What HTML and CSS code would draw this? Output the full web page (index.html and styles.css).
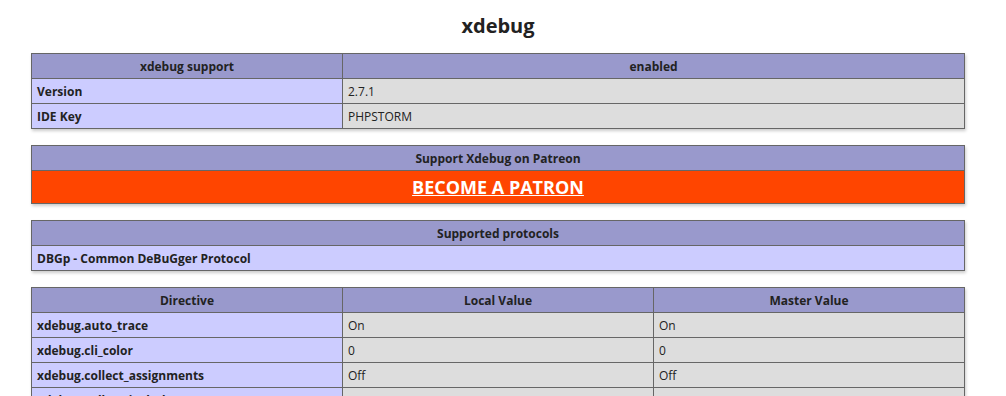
FILE: index.html
```html
<!DOCTYPE html>
<html>
<head>
<meta charset="utf-8">
<title>xdebug</title>
<link rel="stylesheet" href="styles.css">
</head>
<body>
<div class="center">
<h2 class="title">xdebug</h2>
<table>
<tr class="h"><th>xdebug support</th><th>enabled</th></tr>
<tr><td class="e">Version </td><td class="v">2.7.1 </td></tr>
<tr><td class="e">IDE Key </td><td class="v">PHPSTORM </td></tr>
</table>
<table>
<tr class="h"><th>Support Xdebug on Patreon</th></tr>
<tr><td class="patron"><a href="#">BECOME A PATRON</a></td></tr>
</table>
<table>
<tr class="h"><th>Supported protocols</th></tr>
<tr><td class="e">DBGp - Common DeBuGger Protocol</td></tr>
</table>
<table class="directives">
<tr class="h"><th>Directive</th><th>Local Value</th><th>Master Value</th></tr>
<tr><td class="e">xdebug.auto_trace</td><td class="v">On</td><td class="v">On</td></tr>
<tr><td class="e">xdebug.cli_color</td><td class="v">0</td><td class="v">0</td></tr>
<tr><td class="e">xdebug.collect_assignments</td><td class="v">Off</td><td class="v">Off</td></tr>
<tr><td class="e">xdebug.collect_includes</td><td class="v">On</td><td class="v">On</td></tr>
<tr><td class="e">xdebug.collect_params</td><td class="v">0</td><td class="v">0</td></tr>
</table>
</div>
</body>
</html>
```
FILE: styles.css
```css
html, body {
  margin: 0;
  padding: 0;
  background: #fff;
  color: #222;
  font-family: "Open Sans", "Noto Sans", sans-serif;
  overflow: hidden;
}
.center {
  width: 996px;
  text-align: center;
}
.title {
  font-size: 20px;
  font-weight: bold;
  margin: 0;
  padding-top: 12px;
  line-height: 28px;
  height: 27px;
}
table {
  border-collapse: collapse;
  border: 0;
  width: 934px;
  margin: 14px auto 16px;
  text-align: left;
  box-shadow: 1px 2px 3px #ccc;
}
table + table { margin-top: 16px; }
td, th {
  border: 1px solid #666;
  font-size: 12px;
  line-height: 16px;
  vertical-align: baseline;
  padding: 5px 5px 3px;
}
th {
  text-align: center;
  font-weight: bold;
}
.h {
  background-color: #99c;
}
.e {
  background-color: #ccf;
  width: 300px;
  font-weight: bold;
}
.v {
  background-color: #ddd;
}
.directives .v {
  width: 300px;
}
.patron {
  background-color: #ff4500;
  text-align: center;
  font-size: 18px;
  line-height: 24px;
  font-weight: bold;
  padding: 4px 5px;
}
.patron a {
  color: #fff;
  text-decoration: underline;
}
```
